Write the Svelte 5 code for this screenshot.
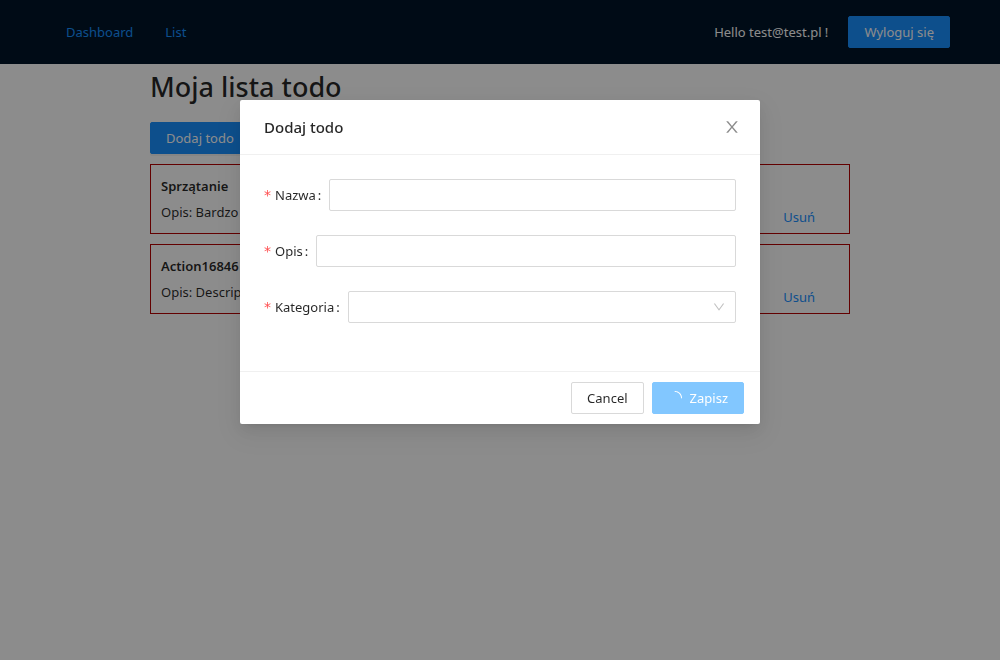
<script>
  const todos = [
    { title: 'Sprzątanie', description: 'Bardzo' },
    { title: 'Action16846', description: 'Descrip' }
  ];
</script>

<div class="page">
  <header>
    <nav>
      <a href="#dashboard">Dashboard</a>
      <a href="#list">List</a>
    </nav>
    <div class="user">
      <span>Hello test@test.pl !</span>
      <button type="button" class="btn primary">Wyloguj się</button>
    </div>
  </header>

  <main>
    <h1>Moja lista todo</h1>
    <button type="button" class="btn primary">Dodaj todo</button>
    <ul>
      {#each todos as todo}
        <li>
          <div class="meta">
            <h4>{todo.title}</h4>
            <p>Opis: {todo.description}</p>
          </div>
          <button type="button" class="btn link">Usuń</button>
        </li>
      {/each}
    </ul>
  </main>
</div>

<div class="mask">
  <div class="modal" role="dialog" aria-modal="true" aria-labelledby="modal-title">
    <div class="modal-header">
      <h2 id="modal-title">Dodaj todo</h2>
      <button type="button" class="close" aria-label="Close">
        <svg viewBox="64 64 896 896" width="16" height="16" fill="currentColor" aria-hidden="true">
          <path d="M563.8 512l262.5-312.9c4.4-5.2.7-13.1-6.1-13.1h-79.8c-4.7 0-9.2 2.1-12.3 5.7L511.6 449.8 295.1 191.7c-3-3.6-7.5-5.7-12.3-5.7H203c-6.8 0-10.5 7.9-6.1 13.1L459.4 512 196.9 824.9A7.95 7.95 0 00203 838h79.8c4.7 0 9.2-2.1 12.3-5.7l216.5-258.1 216.5 258.1c3 3.6 7.5 5.7 12.3 5.7h79.8c6.8 0 10.5-7.9 6.1-13.1L563.8 512z" />
        </svg>
      </button>
    </div>
    <form id="todo-form">
      <div class="field">
        <label for="name"><i>*</i>Nazwa<b>:</b></label>
        <input id="name" type="text" />
      </div>
      <div class="field">
        <label for="description"><i>*</i>Opis<b>:</b></label>
        <input id="description" type="text" />
      </div>
      <div class="field">
        <label for="category"><i>*</i>Kategoria<b>:</b></label>
        <div class="select">
          <select id="category"></select>
          <svg viewBox="64 64 896 896" width="12" height="12" fill="currentColor" aria-hidden="true">
            <path d="M884 256h-75c-5.100 0-9.900 2.500-12.900 6.600L512 654.200 227.900 262.600c-3-4.100-7.800-6.600-12.900-6.600h-75c-6.500 0-10.300 7.400-6.500 12.700l352.600 486.100c12.800 17.600 39 17.600 51.700 0l352.600-486.100c3.900-5.300.1-12.700-6.400-12.700z" />
          </svg>
        </div>
      </div>
    </form>
    <div class="modal-footer">
      <button type="button" class="btn">Cancel</button>
      <button type="submit" form="todo-form" class="btn primary loading">
        <svg viewBox="0 0 1024 1024" width="14" height="14" fill="currentColor" aria-hidden="true">
          <path d="M988 548c-19.900 0-36-16.100-36-36 0-59.400-11.600-117-34.600-171.300a440.450 440.450 0 00-94.300-139.900 437.710 437.710 0 00-139.900-94.300C629 83.600 571.400 72 512 72c-19.900 0-36-16.100-36-36s16.100-36 36-36c69.100 0 136.200 13.500 199.300 40.300C772.300 66 827 103 874 150c47 47 83.900 101.800 109.700 162.700 26.700 63.100 40.200 130.200 40.200 199.300.1 19.900-16 36-35.900 36z" />
        </svg>
        Zapisz
      </button>
    </div>
  </div>
</div>

<style>
  :global(body) {
    margin: 0;
    background: #fff;
    color: rgba(0, 0, 0, 0.85);
    font: 13px/22px 'Noto Sans', 'Open Sans', sans-serif;
  }

  .page,
  .mask,
  .page :global(*),
  .mask :global(*) {
    box-sizing: border-box;
  }

  .page {
    min-height: 100vh;
  }

  header {
    display: flex;
    align-items: center;
    justify-content: space-between;
    height: 64px;
    padding: 0 50px;
    background: #001529;
  }

  nav {
    display: flex;
  }

  nav a {
    padding: 0 16px;
    color: #1890ff;
    text-decoration: none;
  }

  .user {
    display: flex;
    align-items: center;
    gap: 20px;
    color: #fff;
  }

  .btn {
    display: inline-flex;
    align-items: center;
    justify-content: center;
    gap: 8px;
    height: 32px;
    padding: 0 15px;
    border: 1px solid #d9d9d9;
    border-radius: 2px;
    background: #fff;
    color: inherit;
    font: inherit;
    white-space: nowrap;
  }

  .primary {
    border-color: #1890ff;
    background: #1890ff;
    color: #fff;
  }

  .link {
    border-color: transparent;
    background: transparent;
    color: #1890ff;
  }

  .loading {
    border-color: #82c7ff;
    background: #82c7ff;
  }

  main {
    max-width: 700px;
    margin: 0 auto;
  }

  main > .primary {
    box-shadow: 0 2px 0 rgba(0, 0, 0, 0.05);
  }

  h1 {
    margin: 0 0 12px;
    font-size: 27px;
    line-height: 46px;
    font-weight: 500;
  }

  ul {
    display: grid;
    gap: 10px;
    margin: 10px 0 0;
    padding: 0;
    list-style: none;
  }

  li {
    display: flex;
    align-items: flex-end;
    justify-content: space-between;
    padding: 10px 18px 0 10px;
    border: 1px solid #b40000;
  }

  .meta {
    padding-bottom: 10px;
  }

  h4 {
    margin: 0 0 4px;
    font-size: 13px;
    font-weight: 600;
  }

  p {
    margin: 0;
  }

  .mask {
    position: fixed;
    inset: 0;
    padding: 100px 16px 24px;
    overflow: auto;
    background: rgba(0, 0, 0, 0.45);
  }

  .modal {
    max-width: 520px;
    margin: 0 auto;
    border-radius: 2px;
    background: #fff;
    box-shadow:
      0 3px 6px -4px rgba(0, 0, 0, 0.12),
      0 6px 16px rgba(0, 0, 0, 0.08),
      0 9px 28px 8px rgba(0, 0, 0, 0.05);
  }

  .modal-header {
    display: flex;
    align-items: center;
    justify-content: space-between;
    padding-left: 24px;
    border-bottom: 1px solid #f0f0f0;
  }

  h2 {
    margin: 0;
    font-size: 15px;
    line-height: 22px;
    font-weight: 500;
  }

  .close {
    display: grid;
    place-items: center;
    width: 56px;
    height: 54px;
    padding: 0;
    border: 0;
    background: transparent;
    color: rgba(0, 0, 0, 0.45);
  }

  form {
    padding: 24px 24px 0;
  }

  .field {
    display: flex;
    align-items: center;
    padding-bottom: 24px;
  }

  form::after {
    content: '';
    display: block;
    height: 24px;
  }

  label {
    display: flex;
    align-items: center;
    white-space: nowrap;
  }

  label i {
    margin-right: 4px;
    color: #ff4d4f;
    font: 14px/14px 'DejaVu Sans', sans-serif;
  }

  label b {
    margin: 0 8px 0 2px;
    font-weight: 400;
  }

  input,
  select {
    flex: 1;
    width: 100%;
    min-width: 0;
    height: 32px;
    padding: 4px 11px;
    border: 1px solid #d9d9d9;
    border-radius: 2px;
    background: #fff;
    color: inherit;
    font: inherit;
    appearance: none;
  }

  .select {
    position: relative;
    display: flex;
    flex: 1;
  }

  .select svg {
    position: absolute;
    top: 10px;
    right: 11px;
    color: rgba(0, 0, 0, 0.25);
    pointer-events: none;
  }

  .modal-footer {
    display: flex;
    justify-content: flex-end;
    gap: 8px;
    padding: 10px 16px;
    border-top: 1px solid #f0f0f0;
  }
</style>
